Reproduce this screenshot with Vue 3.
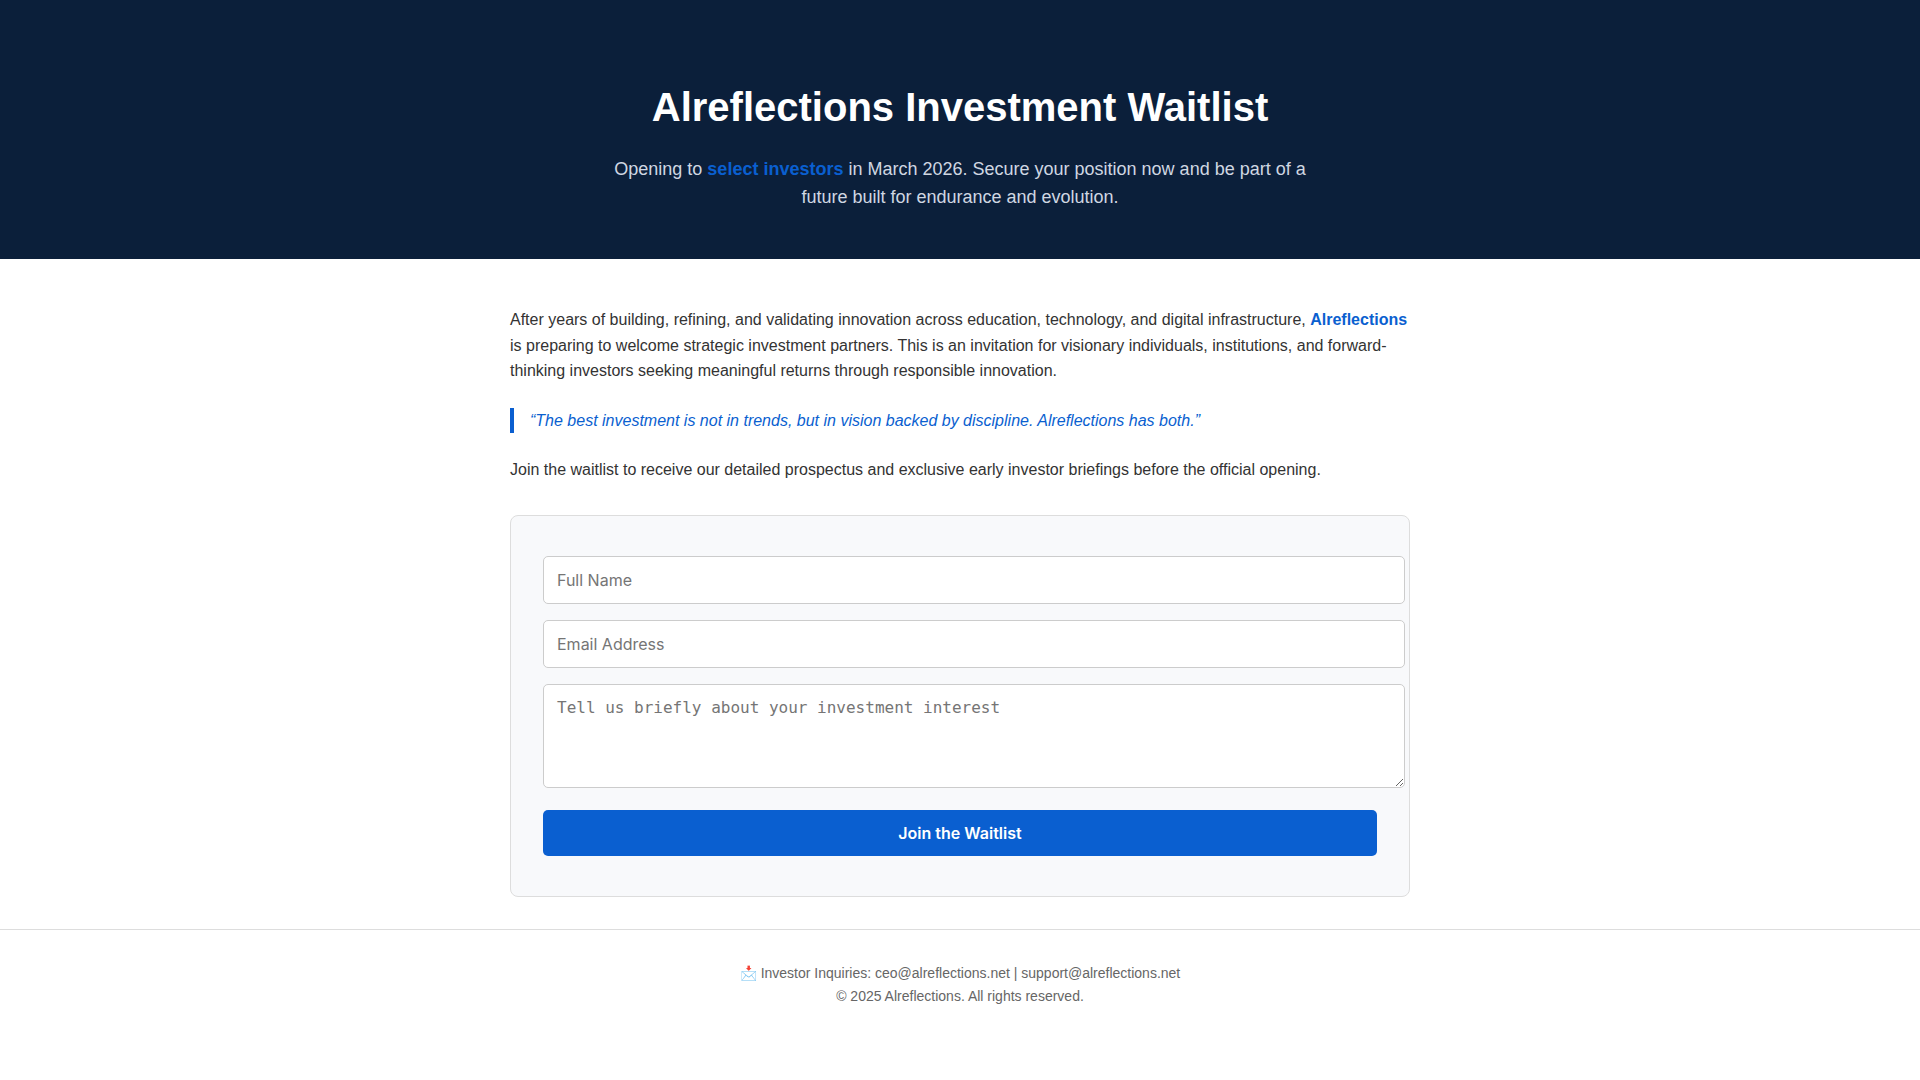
<script setup>
import { ref } from 'vue'

const name = ref('')
const email = ref('')
const interest = ref('')
</script>

<template>
  <div class="page">
    <header class="hero">
      <h1>Alreflections Investment Waitlist</h1>
      <p>Opening to <strong>select investors</strong> in March 2026. Secure your position now and be part of a future built for endurance and evolution.</p>
    </header>

    <main class="content">
      <p>After years of building, refining, and validating innovation across education, technology, and digital infrastructure, <strong>Alreflections</strong> is preparing to welcome strategic investment partners. This is an invitation for visionary individuals, institutions, and forward-thinking investors seeking meaningful returns through responsible innovation.</p>
      <blockquote>“The best investment is not in trends, but in vision backed by discipline. Alreflections has both.”</blockquote>
      <p>Join the waitlist to receive our detailed prospectus and exclusive early investor briefings before the official opening.</p>

      <form class="waitlist" @submit.prevent>
        <input v-model="name" type="text" placeholder="Full Name" aria-label="Full Name" required />
        <input v-model="email" type="email" placeholder="Email Address" aria-label="Email Address" required />
        <textarea v-model="interest" rows="4" placeholder="Tell us briefly about your investment interest" aria-label="Tell us briefly about your investment interest"></textarea>
        <button type="submit">Join the Waitlist</button>
      </form>
    </main>

    <footer class="footer">
      📩 Investor Inquiries: ceo@alreflections.net | support@alreflections.net<br />
      © 2025 Alreflections. All rights reserved.
    </footer>
  </div>
</template>

<style>
body {
  margin: 0;
  background: #fff;
}
</style>

<style scoped>
.page {
  font-family: "Liberation Sans", Arial, sans-serif;
  font-size: 16px;
  line-height: 1.6;
  color: #333;
  text-rendering: optimizeSpeed;
}
.hero {
  padding: 80px 20px 48px;
  background: #0b1f3a;
  color: #fff;
  text-align: center;
}
.hero h1 {
  margin: 0 0 21px;
  font-size: 40px;
  line-height: 54px;
}
.hero p {
  max-width: 700px;
  margin: 0 auto;
  font-size: 18px;
  line-height: 28px;
  color: #d0d7e2;
}
strong {
  color: #0a5fd0;
}
.content {
  max-width: 900px;
  margin: 48px auto 32px;
}
.content p {
  margin: 0 0 24px;
}
blockquote {
  margin: 0 0 24px;
  padding-left: 16px;
  border-left: 4px solid #0a5fd0;
  color: #0a5fd0;
  font-style: italic;
}
.waitlist {
  margin-top: 32px;
  padding: 40px 32px;
  border: 1px solid #ddd;
  border-radius: 8px;
  background: #f8f9fb;
}
input,
textarea {
  display: block;
  width: 100%;
  margin: 0 0 16px;
  padding: 13px;
  border: 1px solid #ccc;
  border-radius: 5px;
  background: #fff;
  font-family: Inter, sans-serif;
  font-size: 16px;
}
textarea {
  margin-bottom: 22px;
  font-family: "DejaVu Sans Mono", monospace;
}
button {
  display: block;
  width: 100%;
  padding: 13px;
  border: 0;
  border-radius: 5px;
  background: #0a5fd0;
  color: #fff;
  font-family: Inter, sans-serif;
  font-size: 16px;
  font-weight: 600;
}
.footer {
  padding: 32px 20px;
  border-top: 1px solid #ddd;
  color: #666;
  font-size: 14px;
  line-height: 23px;
  text-align: center;
}
</style>
